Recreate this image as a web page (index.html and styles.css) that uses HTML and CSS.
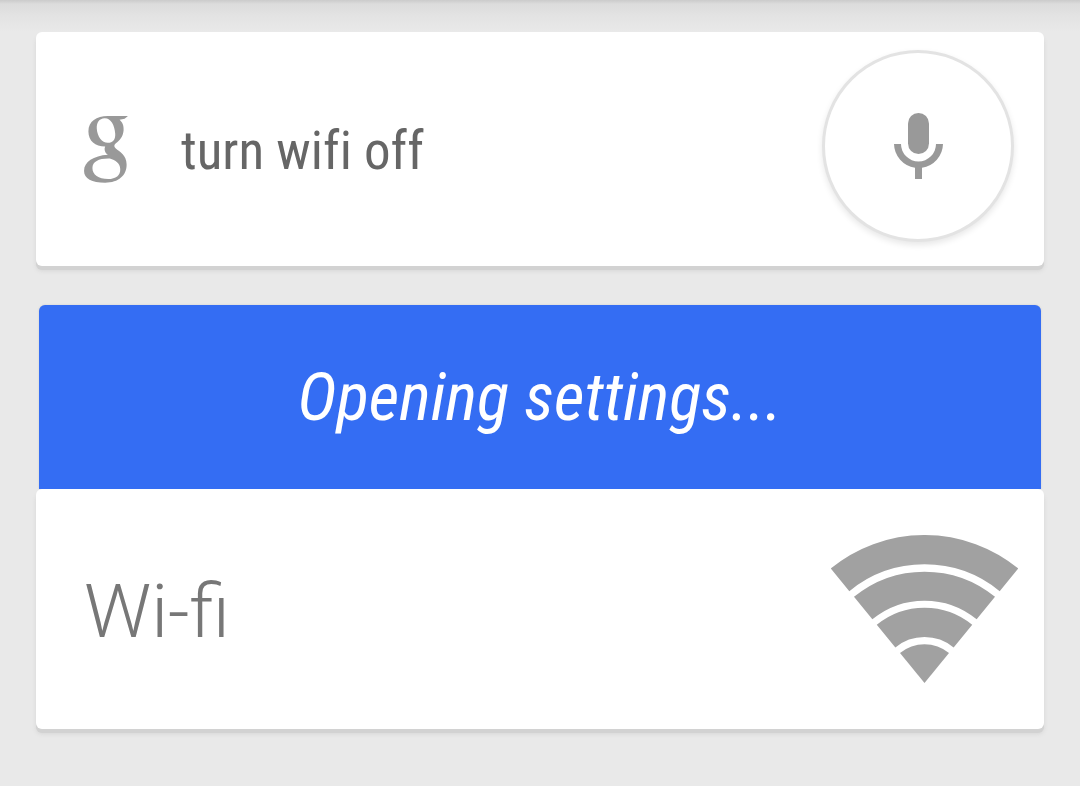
FILE: index.html
```html
<!DOCTYPE html>
<html lang="en">
<head>
<meta charset="utf-8">
<meta name="viewport" content="width=device-width, initial-scale=1">
<title>Voice search</title>
<link rel="stylesheet" href="styles.css">
</head>
<body>
<main class="page">
  <form class="card search">
    <svg class="logo" viewBox="27 33 131 200" role="img" aria-label="Google">
      <path fill-rule="evenodd" d="M98 33H158L148 41L133 44C141 51 146 60 145 76C143 96 133 106 122 114C116 119 116 123 121 129C134 140 154 150 154 177C155 210 130 232 90 232C50 232 27 220 27 197C27 170 55 152 98 149C90 143 86 133 90 124C60 124 40 107 40 79C40 49 64 33 98 33ZM88 40C72 41 64 53 65 71C67 95 80 113 98 113C113 113 121 104 120 86C118 60 107 39 88 40ZM104 160C72 159 52 169 52 188C52 208 70 221 99 221C122 221 136 210 135 191C134 174 121 165 104 160Z"/>
    </svg>
    <input class="query" type="text" value="turn wifi off" aria-label="Search" spellcheck="false">
    <button class="mic" type="button" aria-label="Voice search">
      <svg class="mic-icon" viewBox="0 0 147 198" aria-hidden="true">
        <rect x="42" width="63" height="123" rx="31.5"/>
        <path d="M0 93H21A52.5 52.5 0 0 0 126 93H147A73.500 73.500 0 0 1 84 164V198H63V164A73.500 73.500 0 0 1 0 93Z"/>
      </svg>
    </button>
  </form>
  <section class="result">
    <p class="status">Opening settings...</p>
    <a class="card setting" href="#wifi">
      <span class="setting-name">Wi-fi</span>
      <svg class="wifi-icon" viewBox="62 44 560 444" aria-hidden="true">
        <g class="waves">
          <path stroke-width="88" d="M88.600 178.500A400 400 0 0 1 595.400 178.500"/>
          <path stroke-width="87" d="M158 263.200A290.500 290.500 0 0 1 526 263.200"/>
          <path stroke-width="88" d="M226.700 347.200A182 182 0 0 1 457.300 347.200"/>
        </g>
        <path d="M342 488L268.500 398.200A116 116 0 0 1 415.500 398.200Z"/>
      </svg>
    </a>
  </section>
</main>
</body>
</html>
```
FILE: styles.css
```css
* {
  box-sizing: border-box;
}

body {
  margin: 0;
  min-height: 100vh;
  background: linear-gradient(#cbcbcb, #dcdcdc 4px, #e3e3e3 16px, #e9e9e9 32px) no-repeat #e9e9e9;
  font-family: "Roboto", sans-serif;
}

.page {
  display: flex;
  flex-direction: column;
  gap: 39px;
  padding: 32px 36px;
}

.card {
  display: flex;
  align-items: center;
  background: #fff;
  border-radius: 6px;
  box-shadow: 0 4px 0 #d2d2d2, 0 5px 4px #d6d6d6;
}

.search {
  min-height: 234px;
  padding: 0 30px 0 48px;
}

.logo {
  flex: none;
  width: 44px;
  height: 67px;
  fill: #999;
}

.query {
  flex: 1;
  min-width: 0;
  margin: 0 24px 0 53px;
  padding: 4px 0 0;
  border: 0;
  outline: 0;
  background: none;
  color: #666;
  font: 53px/72px "Roboto Condensed", "Roboto", sans-serif;
  font-variant-ligatures: none;
}

.mic {
  display: grid;
  place-items: center;
  flex: none;
  width: 192px;
  height: 192px;
  margin-bottom: 6px;
  padding: 0;
  border: 3px solid #e3e3e3;
  border-radius: 50%;
  background: #fff;
  box-shadow: 0 3px 6px #e8e8e8;
}

.mic-icon {
  width: 49px;
  height: 66px;
  fill: #999;
}

.status {
  display: grid;
  place-items: center;
  min-height: 184px;
  margin: 0 3px;
  border-radius: 6px 6px 0 0;
  background: #346df3;
  box-shadow: 0 0 2px #c8c8c8;
  color: #fff;
  font: italic 400 67px/80px "Roboto Condensed", "Roboto", sans-serif;
}

.setting {
  position: relative;
  justify-content: space-between;
  min-height: 240px;
  padding: 0 26px 0 48px;
  color: #777;
  text-decoration: none;
}

.setting-name {
  padding-top: 4px;
  font-size: 75px;
  font-weight: 300;
  line-height: 88px;
}

.wifi-icon {
  width: 187px;
  height: 148px;
  fill: #a1a1a1;
}

.waves {
  fill: none;
  stroke: #a1a1a1;
}
```
